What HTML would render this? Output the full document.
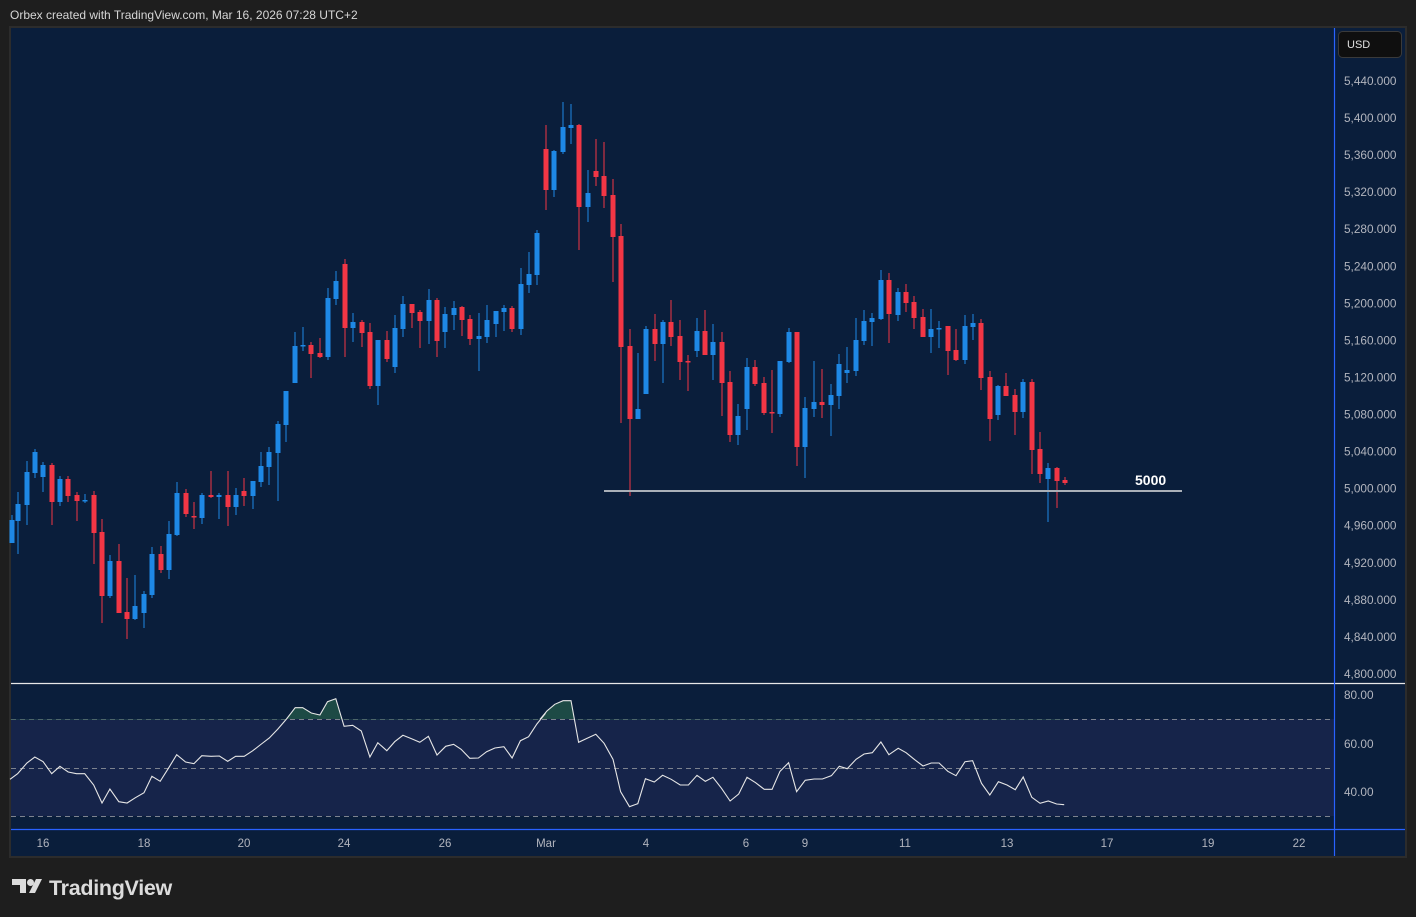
<!DOCTYPE html>
<html><head><meta charset="utf-8"><style>
html,body{margin:0;padding:0;background:#1e1e1e;width:1416px;height:917px;overflow:hidden;font-family:"Liberation Sans",sans-serif}
</style></head><body>
<svg id="s" width="1416" height="917" xmlns="http://www.w3.org/2000/svg" style="position:absolute;left:0;top:0">
<text x="10" y="19" fill="#d6d6d6" font-size="12" font-family="Liberation Sans, sans-serif">Orbex created with TradingView.com, Mar 16, 2026 07:28 UTC+2</text>
<rect x="9" y="26" width="1398" height="832" fill="#2c2c2c"/>
<rect x="11" y="28" width="1394" height="828" fill="#0a1e3b"/>
<rect x="11" y="719" width="1323" height="97" fill="#16244a"/>
<g stroke="#7d838f" stroke-width="1" stroke-dasharray="5 4">
<line x1="11" y1="719.5" x2="1334" y2="719.5"/><line x1="11" y1="768.5" x2="1334" y2="768.5"/><line x1="11" y1="816.5" x2="1334" y2="816.5"/></g>
<line x1="11" y1="683.5" x2="1405" y2="683.5" stroke="#e8e8e8" stroke-width="1.2"/>
<line x1="11" y1="829.5" x2="1405" y2="829.5" stroke="#2962ff" stroke-width="1.2"/>
<line x1="1334.5" y1="28" x2="1334.5" y2="856" stroke="#2962ff" stroke-width="1.2"/>
<rect x="1338.5" y="31.5" width="63" height="26" rx="4" fill="#0f0f0f" stroke="#3a3a3a"/>
<text x="1347" y="48" fill="#e0e0e0" font-size="11">USD</text>
<g id="pl" fill="#b2b5be" font-size="11.8"></g>
<g id="candles"></g>
<line x1="604" y1="491" x2="1182" y2="491" stroke="#aab0b8" stroke-width="2"/>
<text x="1135" y="485" fill="#ffffff" font-size="14" font-weight="bold">5000</text>
<g id="rsi"></g>
<g fill="#b2b5be" font-size="11.5" text-anchor="middle" id="dl"></g>
<g fill="#dcdcdc">
<path d="M12 879h14v14h-6v-8h-8z"/><circle cx="30.5" cy="882.5" r="3.5"/><path d="M36 879h6l-7 14h-6z"/>
</g>
<text x="49" y="895" fill="#dcdcdc" font-size="21.5" font-weight="bold" letter-spacing="-0.3">TradingView</text>
</svg>
<script>
var NS="http://www.w3.org/2000/svg";
function el(p,t,a,txt){var e=document.createElementNS(NS,t);for(var k in a)e.setAttribute(k,a[k]);if(txt)e.textContent=txt;document.getElementById(p).appendChild(e);return e;}
for(var i=0;i<=16;i++){var p=5440-i*40;var y=81+i*37.06;el("pl","text",{x:1344,y:y+4},p.toLocaleString("en-US")+".000");}
el("pl","text",{x:1344,y:699},"80.00");el("pl","text",{x:1344,y:748},"60.00");el("pl","text",{x:1344,y:796},"40.00");
var D=[["16",43],["18",144],["20",244],["24",344],["26",445],["Mar",546],["4",646],["6",746],["9",805],["11",905],["13",1007],["17",1107],["19",1208],["22",1299]];
D.forEach(function(d){el("dl","text",{x:d[1],y:847},d[0]);});
var C=[[11.7,520,543,515,543,'b'],[18.3,504,521,492,554,'b'],[27.3,472,505,461,525,'b'],[35.3,452,473,449,478,'b'],[43.3,465,477,462,492,'b'],[52.3,465,502,463,525,'r'],[60.3,479,502,476,506,'b'],[68.3,479,496,476,502,'r'],[77.3,495,501,492,521,'r'],[85.3,500,501,494,503,'b'],[94.3,495,533,491,564,'r'],[102.3,532,596,519,623,'r'],[110.3,561,596,555,598,'b'],[119.3,561,613,544,613,'r'],[127.3,612,619,578,639,'r'],[135.3,606,619,575,620,'b'],[144.3,594,613,591,628,'b'],[152.3,554,595,547,598,'b'],[161.3,554,570,546,573,'r'],[169.3,534,570,521,579,'b'],[177.3,493,535,482,536,'b'],[186.3,493,514,489,517,'r'],[194.3,516,517,502,529,'r'],[202.3,495,518,493,524,'b'],[211.3,495,497,471,498,'r'],[219.3,495,497,493,519,'b'],[228.3,495,507,471,526,'r'],[236.3,495,507,488,515,'b'],[244.3,491,496,478,506,'r'],[253.3,481,496,481,509,'b'],[261.3,466,482,452,487,'b'],[269.3,452,467,447,485,'b'],[278.3,424,453,421,501,'b'],[286.3,391,425,391,442,'b'],[295.3,346,383,332,383,'b'],
[303.3,345,346,327,351,'b'],[311.3,345,354,342,378,'r'],[320.3,353,357,338,358,'r'],[328.3,298,357,288,360,'b'],[336.3,281,299,271,305,'b'],[345.3,264,328,259,357,'r'],[353.3,322,328,313,342,'b'],[362.3,322,333,320,347,'r'],[370.3,332,386,323,389,'r'],[378.3,340,386,340,405,'b'],[387.3,340,359,331,362,'r'],[395.3,328,367,315,373,'b'],[403.3,304,329,296,337,'b'],[412.3,304,313,304,328,'r'],[420.3,312,321,310,348,'r'],[429.3,300,321,289,344,'b'],[437.3,300,341,298,357,'r'],[445.3,314,332,307,348,'b'],[454.3,308,315,301,330,'b'],[462.3,307,320,306,336,'r'],[470.3,319,339,315,345,'r'],[479.3,336,339,313,371,'b'],[487.3,320,337,305,343,'b'],[496.3,311,324,311,337,'b'],[504.3,308,312,305,331,'b'],[512.3,308,329,306,332,'r'],[521.3,284,329,268,335,'b'],[529.3,274,285,252,293,'b'],[537.3,233,275,230,285,'b'],[546.3,149,190,125,210,'r'],[554.3,151,190,150,197,'b'],[563.3,127,152,102,154,'b'],[571.3,125,128,104,144,'b'],[579.3,125,207,124,250,'r'],[588.3,193,207,170,222,'b'],[596.3,171,177,139,186,'r'],[604.3,176,196,142,208,'r'],[613.3,195,237,179,282,'r'],[621.3,236,347,224,423,'r'],
[630.3,346,419,329,496,'r'],[638.3,409,419,353,419,'b'],[646.3,329,394,326,394,'b'],[655.3,329,344,314,361,'r'],[663.3,322,344,320,383,'b'],[671.3,322,337,300,346,'r'],[680.3,336,362,320,380,'r'],[688.3,361,362,355,391,'r'],[697.3,331,351,318,357,'b'],[705.3,331,355,310,355,'r'],[713.3,342,355,324,380,'b'],[722.3,342,383,332,416,'r'],[730.3,382,435,371,442,'r'],[738.3,416,435,404,445,'b'],[747.3,367,409,358,430,'b'],[755.3,367,384,360,386,'r'],[764.3,383,413,377,415,'r'],[772.3,412,413,370,433,'r'],[780.3,361,414,361,417,'b'],[789.3,332,362,328,363,'b'],[797.3,332,447,332,466,'r'],[805.3,408,447,397,478,'b'],[814.3,402,409,361,417,'b'],[822.3,402,405,369,418,'r'],[831.3,395,405,384,436,'b'],[839.3,364,396,354,409,'b'],[847.3,370,373,347,383,'b'],[856.3,340,371,318,376,'b'],[864.3,321,341,310,345,'b'],
[872.3,318,322,313,346,'b'],[881.3,280,319,270,320,'b'],[889.3,280,314,273,343,'r'],[898.3,292,315,288,321,'b'],[906.3,292,303,284,312,'r'],[914.3,302,318,296,329,'r'],[923.3,317,337,309,337,'r'],[931.3,329,337,309,353,'b'],[939.3,328,329,321,348,'b'],[948.3,326,351,326,375,'r'],[956.3,350,360,329,361,'r'],[965.3,326,360,315,364,'b'],[973.3,323,327,314,340,'b'],[981.3,323,378,319,390,'r'],[990.3,377,419,371,441,'r'],[998.3,386,415,385,420,'b'],[1006.3,386,396,373,396,'r'],[1015.3,395,412,389,435,'r'],[1023.3,382,412,379,418,'b'],[1032.3,382,450,379,474,'r'],[1040.3,449,474,432,483,'r'],[1048.3,468,479,463,522,'b'],[1057.3,468,481,467,508,'r'],[1065.3,480,483,477,485,'r']];
C.forEach(function(c){var col=c[5]=='b'?'#1e88e5':'#f23645';var x=Math.round(c[0]);
el("candles","rect",{x:x-0.5,y:c[3],width:1,height:c[4]-c[3],fill:col});
el("candles","rect",{x:x-2.5,y:c[1],width:5,height:Math.max(1.5,c[2]-c[1]),fill:col});});
var A=[[0,283],[22,266],[49,234],[72,216],[96,230],[121,266],[145,244],[169,261],[193,266],[217,266],[243,300],[267,354],[290,312],[316,350],[340,354],[364,338],[389,323],[412,274],[436,289],[460,250],[484,209],[510,231],[534,236],[557,212],[584,214],[608,213],[632,229],[655,214],[680,214],[705,197],[730,177],[753,159],[778,132],[803,102],[828,68],[850,68],[875,84],[900,90],[922,50],[946,41],[970,124],[995,121],[1020,138],[1045,216],[1068,173],[1094,197],[1117,170],[1141,151],[1166,161],[1190,172],[1215,154],[1240,210],[1265,184],[1288,178],[1310,193],[1335,220],[1360,219],[1384,200],[1408,189],[1434,185],[1458,219],[1482,167],[1506,155],[1530,117],[1555,85]];
var B=[[0,103],[20,78],[43,58],[67,47],[90,47],[112,172],[137,160],[162,148],[186,175],[212,223],[234,320],[260,365],[284,356],[306,281],[332,291],[356,271],[381,283],[407,300],[431,300],[456,271],[480,289],[502,277],[527,310],[552,348],[577,327],[601,277],[626,293],[651,313],[674,313],[697,259],[722,233],[745,320],[770,286],[796,282],[820,282],[846,272],[869,244],[892,251],[918,223],[941,207],[965,203],[990,171],[1013,209],[1040,190],[1063,203],[1088,224],[1112,243],[1136,234],[1159,234],[1184,259],[1208,272],[1234,230],[1256,227],[1282,295],[1306,330],[1331,290],[1356,300],[1380,314],[1403,276],[1428,337],[1452,355],[1476,348],[1500,357],[1522,359]];
var S=1568/540;
var P=A.map(function(p){return [p[0]/S+10,p[1]/3+685];}).concat(B.map(function(p){return [p[0]/S+540,p[1]/3+685];}));
var d=P.map(function(p,i){return (i?"L":"M")+p[0].toFixed(1)+" "+p[1].toFixed(1);}).join("");
var cp=el("rsi","clipPath",{id:"ob"});var r=document.createElementNS(NS,"rect");r.setAttribute("x",0);r.setAttribute("y",680);r.setAttribute("width",1400);r.setAttribute("height",39.5);cp.appendChild(r);
el("rsi","path",{d:d+"L"+P[P.length-1][0]+" 719L10 719Z",fill:"#1d4a45","clip-path":"url(#ob)"});
el("rsi","path",{d:d,fill:"none",stroke:"#e6e6e6","stroke-width":1.1});
</script>
</body></html>
